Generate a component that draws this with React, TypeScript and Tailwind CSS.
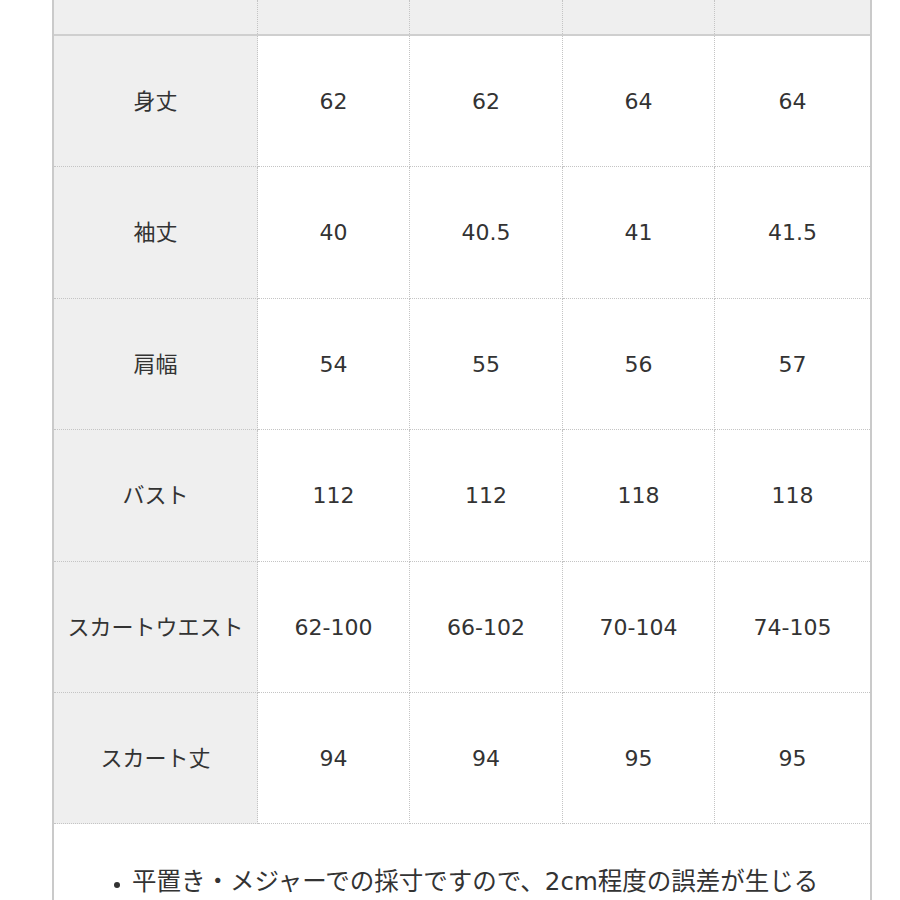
const cols = ["S", "M", "L", "XL"];

const rows: { label: string; values: string[]; h: string }[] = [
  { label: "身丈", values: ["62", "62", "64", "64"], h: "h-[131px]" },
  { label: "袖丈", values: ["40", "40.5", "41", "41.5"], h: "h-[132px]" },
  { label: "肩幅", values: ["54", "55", "56", "57"], h: "h-[131px]" },
  { label: "バスト", values: ["112", "112", "118", "118"], h: "h-[132px]" },
  { label: "スカートウエスト", values: ["62-100", "66-102", "70-104", "74-105"], h: "h-[131px]" },
  { label: "スカート丈", values: ["94", "94", "95", "95"], h: "h-[131px]" },
];

const SizeTable: React.FC = () => {
  return (
    <div className="ml-[52px] w-[820px] border-x-2 border-[#cacaca] bg-white">
      <div className="grid grid-cols-[204px_152px_153px_152px_155px] h-[36px] border-b-2 border-[#cfcfcf] bg-[#efefef]">
        <div className="border-r border-dotted border-[#c4c4c4]" />
        {cols.map((c, i) => (
          <div
            key={c}
            className={i < 3 ? "border-r border-dotted border-[#c4c4c4]" : ""}
          />
        ))}
      </div>
      {rows.map((r) => (
        <div
          key={r.label}
          className={`grid grid-cols-[204px_152px_153px_152px_155px] ${r.h}`}
        >
          <div className="flex items-center justify-center bg-[#efefef] border-r border-b border-dotted border-[#c4c4c4]">
            {r.label}
          </div>
          {r.values.map((v, i) => (
            <div
              key={i}
              className={`flex items-center justify-center border-b border-dotted border-[#c4c4c4] ${
                i < 3 ? "border-r" : ""
              }`}
            >
              {v}
            </div>
          ))}
        </div>
      ))}
      <div className="pt-[42px] pl-[50px] pb-[40px] text-[24.5px]">
        <ul className="list-disc pl-[28px] leading-[32px] marker:text-[18px]">
          <li>平置き・メジャーでの採寸ですので、2cm程度の誤差が生じる</li>
        </ul>
      </div>
    </div>
  );
};

export default function App() {
  return (
    <div className="w-[900px] h-[900px] overflow-hidden bg-white text-[#333] text-[22px] font-['DejaVu_Sans','Noto_Sans_CJK_JP',sans-serif]">
      <SizeTable />
    </div>
  );
}
